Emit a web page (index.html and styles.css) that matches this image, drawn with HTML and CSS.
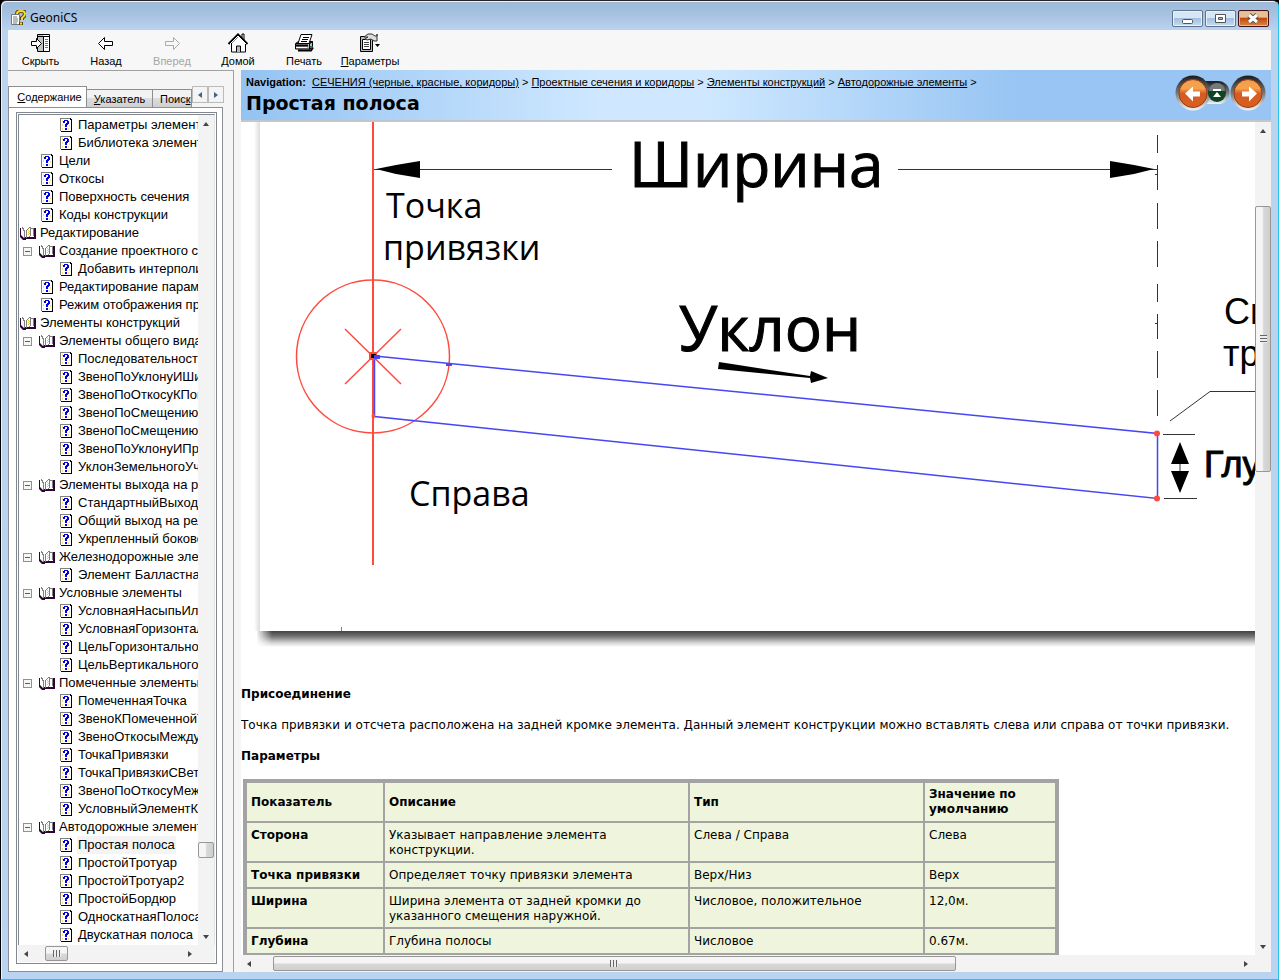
FILE: index.html
```html
<!DOCTYPE html>
<html lang="ru">
<head>
<meta charset="utf-8">
<title>GeoniCS</title>
<link rel="stylesheet" href="styles.css">
</head>
<body>
<svg class="defs" aria-hidden="true">
  <symbol id="page" viewBox="-1 0 16 16">
    <path d="M3 2h9v12H3z" fill="#fff"/>
    <path d="M1 1h11v1H2v12H1z" fill="#808080"/>
    <path d="M11 1h1v1h1v13H2v-1h10V3h-1z" fill="#000"/>
    <path d="M3 3h1v2H3zM3 7h1v2H3zM3 11h1v2H3zM10 8h1v2h-1zM9 11h1v2H9z" fill="#ffe27a"/>
    <path d="M4 4h1V3h4v1h1v3H9v1H8v2H6V7h1V6h1V4H6v2H4zM6 11h2v2H6z" fill="#0000e0"/>
  </symbol>
  <symbol id="book" viewBox="0 0 16 16">
    <path d="M1 2h2l2 3v8H3l-2-3z" fill="#fff"/>
    <path d="M6 4l3-3h1v2h4v9l-7 1H6z" fill="#fff"/>
    <path d="M0 3h1v7l3 3h2v2H3l-3-3z" fill="#2b062f"/>
    <path d="M14 3h2v11H4v-2h10z" fill="#2b062f"/>
    <path d="M2 2h1v1h1v2h1v8H4V6H3V4H2zM6 5h1v8H6zM7 4h1v1H7zM8 3h1v1H8zM9 2h2v9h-1V3H9zM9 11h1v1H9zM11 3h3v1h-3zM13 4h1v7h-1z" fill="#808080"/>
    <path d="M8 5h1v1H8zM8 7h1v1H8zM8 9h1v1H8zM9 6h1v1H9zM9 8h1v1H9z" fill="#f5cf3b"/>
  </symbol>
</svg>
<div class="window">
  <header class="titlebar">
    <svg class="app-icon" viewBox="0 0 16 16" aria-hidden="true">
      <path d="M1.500 4.500h8v10h-8z" fill="#fff" stroke="#777"/>
      <path d="M3 7h4M3 9h5M3 11h5M3 13h4" stroke="#777"/>
      <path d="M7 4q0-3 4-3 4 0 4 3 0 2-3 4v2M11 12v3" fill="none" stroke="#594510" stroke-width="4"/>
      <path d="M7 4q0-3 4-3 4 0 4 3 0 2-3 4v2M11 12.500v2" fill="none" stroke="#ffd92e" stroke-width="2"/>
    </svg>
    <span class="app-name">GeoniCS</span>
    <button class="win-btn" aria-label="Свернуть"><svg viewBox="0 0 29 15"><rect x="9.500" y="8.500" width="10" height="4" rx="1" fill="#fff" stroke="#555"/></svg></button>
    <button class="win-btn" aria-label="Развернуть"><svg viewBox="0 0 29 15"><path d="M9.500 3.500h10v8h-10z" fill="#fff" stroke="#555"/><path d="M12.500 6.500h4v2h-4z" fill="#9cc0e0" stroke="#555"/></svg></button>
    <button class="win-btn close" aria-label="Закрыть"><svg viewBox="0 0 29 15"><path d="M10 4l8 7M18 4l-8 7" stroke="#555" stroke-width="5"/><path d="M10 4l8 7M18 4l-8 7" stroke="#fff" stroke-width="3"/></svg></button>
  </header>

  <nav class="toolbar" aria-label="Панель инструментов">
    <button class="tool"><svg viewBox="0 0 22 20"><path d="M7.500 1.500h12v17h-12z" fill="#fff" stroke="#000"/><path d="M8 2h5v16H8z" fill="#c4c4c4"/><path d="M7 3.500h13M13.500 4v14" stroke="#000"/><path d="M15 6.500h3M15 8.500h3M15 10.500h3M15 12.500h3M15 14.500h3" stroke="#777"/><path d="M1.500 8.500h5v-3l5 5-5 5v-3h-5z" fill="#fff" stroke="#000"/></svg><span>Скрыть</span></button>
    <button class="tool"><svg viewBox="0 0 22 20"><path d="M3.500 10.500l6-6v4h8v4h-8v4z" fill="#fff" stroke="#000"/></svg><span>Назад</span></button>
    <button class="tool" disabled><svg viewBox="0 0 22 20"><path d="M18.500 10.500l-6-6v4h-8v4h8v4z" fill="#f7f7f7" stroke="#aaa"/></svg><span>Вперед</span></button>
    <button class="tool"><svg viewBox="0 0 22 20"><path d="M4.500 10v9h14v-9l-7-7z" fill="#fff" stroke="#000"/><path d="M15 5V1h2v6" fill="#fff" stroke="#000"/><path d="M1.500 11l9.500-9.500L20.500 11" fill="none" stroke="#000" stroke-width="2"/><path d="M3 11l8-8 8 8" fill="none" stroke="#fff"/><path d="M9.500 19v-6h4v6" fill="#bbb" stroke="#000"/></svg><span>Домой</span></button>
    <button class="tool"><svg viewBox="0 0 22 20"><path d="M2.500 10.500l3-2h14l-3 2zM2.500 11v5h14v-5M16.500 10.500l3-2v5l-3 3z" fill="#bbb" stroke="#000"/><path d="M5 10.500l3-9h11l-3 9z" fill="#fff" stroke="#000"/><path d="M10 4.500h6M9 6.500h6M8 8.500h6" stroke="#000"/><path d="M3 12.500h12M5 17.500h13l2-3" fill="none" stroke="#000" stroke-width="2"/><path d="M3 14.500h11" stroke="#fff"/><path d="M17 13h2v2h-2z" fill="#157f7f"/></svg><span>Печать</span></button>
    <button class="tool"><svg viewBox="0 0 22 20"><path d="M1.500 3.500h12v15h-12z" fill="#bbb" stroke="#000"/><path d="M3.500 6.500h8v10h-8z" fill="#fff" stroke="#000"/><path d="M5 9.500h5M5 11.500h5M5 13.500h5" stroke="#444"/><path d="M5 4l4-3h4l3 2h2V1v7h-3l-3-2-4 1-2-1 3-2z" fill="#ddd" stroke="#333"/><path d="M16 11h5l-2.500 3z" fill="#000"/></svg><span><u>П</u>араметры</span></button>
  </nav>

  <div class="workspace">
    <aside class="sidebar">
      <div class="tabs" role="tablist">
        <button class="tab active" role="tab" aria-selected="true"><u>С</u>одержание</button>
        <button class="tab" role="tab"><u>У</u>казатель</button>
        <button class="tab clipped" role="tab">Поис<u>к</u></button>
        <button class="tab-arrow" aria-label="Вкладки влево"><i class="tri left"></i></button>
        <button class="tab-arrow" aria-label="Вкладки вправо"><i class="tri right"></i></button>
      </div>
      <div class="panel">
        <div class="tree-frame">
          <div class="tree-main">
            <ul class="tree">
              <li class="l3"><svg><use href="#page"/></svg><span>Параметры элемента</span></li>
              <li class="l3"><svg><use href="#page"/></svg><span>Библиотека элемент</span></li>
              <li class="l2"><svg><use href="#page"/></svg><span>Цели</span></li>
              <li class="l2"><svg><use href="#page"/></svg><span>Откосы</span></li>
              <li class="l2"><svg><use href="#page"/></svg><span>Поверхность сечения</span></li>
              <li class="l2"><svg><use href="#page"/></svg><span>Коды конструкции</span></li>
              <li class="l1"><svg><use href="#book"/></svg><span>Редактирование</span></li>
              <li class="branch"><button class="toggle" aria-label="Свернуть ветвь"></button><svg><use href="#book"/></svg><span>Создание проектного се</span></li>
              <li class="l3"><svg><use href="#page"/></svg><span>Добавить интерполи</span></li>
              <li class="l2"><svg><use href="#page"/></svg><span>Редактирование парам</span></li>
              <li class="l2"><svg><use href="#page"/></svg><span>Режим отображения пр</span></li>
              <li class="l1"><svg><use href="#book"/></svg><span>Элементы конструкций</span></li>
              <li class="branch"><button class="toggle" aria-label="Свернуть ветвь"></button><svg><use href="#book"/></svg><span>Элементы общего вида</span></li>
              <li class="l3"><svg><use href="#page"/></svg><span>Последовательность</span></li>
              <li class="l3"><svg><use href="#page"/></svg><span>ЗвеноПоУклонуИШи</span></li>
              <li class="l3"><svg><use href="#page"/></svg><span>ЗвеноПоОткосуКПов</span></li>
              <li class="l3"><svg><use href="#page"/></svg><span>ЗвеноПоСмещению</span></li>
              <li class="l3"><svg><use href="#page"/></svg><span>ЗвеноПоСмещению</span></li>
              <li class="l3"><svg><use href="#page"/></svg><span>ЗвеноПоУклонуИПр</span></li>
              <li class="l3"><svg><use href="#page"/></svg><span>УклонЗемельногоУч</span></li>
              <li class="branch"><button class="toggle" aria-label="Свернуть ветвь"></button><svg><use href="#book"/></svg><span>Элементы выхода на р</span></li>
              <li class="l3"><svg><use href="#page"/></svg><span>СтандартныйВыходН</span></li>
              <li class="l3"><svg><use href="#page"/></svg><span>Общий выход на рел</span></li>
              <li class="l3"><svg><use href="#page"/></svg><span>Укрепленный боково</span></li>
              <li class="branch"><button class="toggle" aria-label="Свернуть ветвь"></button><svg><use href="#book"/></svg><span>Железнодорожные эле</span></li>
              <li class="l3"><svg><use href="#page"/></svg><span>Элемент Балластная</span></li>
              <li class="branch"><button class="toggle" aria-label="Свернуть ветвь"></button><svg><use href="#book"/></svg><span>Условные элементы</span></li>
              <li class="l3"><svg><use href="#page"/></svg><span>УсловнаяНасыпьИли</span></li>
              <li class="l3"><svg><use href="#page"/></svg><span>УсловнаяГоризонтал</span></li>
              <li class="l3"><svg><use href="#page"/></svg><span>ЦельГоризонтально</span></li>
              <li class="l3"><svg><use href="#page"/></svg><span>ЦельВертикального</span></li>
              <li class="branch"><button class="toggle" aria-label="Свернуть ветвь"></button><svg><use href="#book"/></svg><span>Помеченные элементы</span></li>
              <li class="l3"><svg><use href="#page"/></svg><span>ПомеченнаяТочка</span></li>
              <li class="l3"><svg><use href="#page"/></svg><span>ЗвеноКПомеченнойТ</span></li>
              <li class="l3"><svg><use href="#page"/></svg><span>ЗвеноОткосыМежду</span></li>
              <li class="l3"><svg><use href="#page"/></svg><span>ТочкаПривязки</span></li>
              <li class="l3"><svg><use href="#page"/></svg><span>ТочкаПривязкиСВет</span></li>
              <li class="l3"><svg><use href="#page"/></svg><span>ЗвеноПоОткосуМеж</span></li>
              <li class="l3"><svg><use href="#page"/></svg><span>УсловныйЭлементКП</span></li>
              <li class="branch"><button class="toggle" aria-label="Свернуть ветвь"></button><svg><use href="#book"/></svg><span>Автодорожные элемент</span></li>
              <li class="l3"><svg><use href="#page"/></svg><span class="selected">Простая полоса</span></li>
              <li class="l3"><svg><use href="#page"/></svg><span>ПростойТротуар</span></li>
              <li class="l3"><svg><use href="#page"/></svg><span>ПростойТротуар2</span></li>
              <li class="l3"><svg><use href="#page"/></svg><span>ПростойБордюр</span></li>
              <li class="l3"><svg><use href="#page"/></svg><span>ОдноскатнаяПолоса</span></li>
              <li class="l3"><svg><use href="#page"/></svg><span>Двускатная полоса</span></li>
            </ul>
            <div class="vbar tree-vbar">
              <button class="arrow" aria-label="Вверх"><i class="tri up"></i></button>
              <div class="before"></div><div class="thumb"></div><div class="after"></div>
              <button class="arrow" aria-label="Вниз"><i class="tri down"></i></button>
            </div>
          </div>
          <div class="hbar tree-hbar">
            <button class="arrow" aria-label="Влево"><i class="tri left"></i></button>
            <div class="before"></div><div class="thumb"><i class="grip"></i></div><div class="after"></div>
            <button class="arrow" aria-label="Вправо"><i class="tri right"></i></button>
          </div>
        </div>
      </div>
    </aside>

    <main class="content">
      <header class="topic">
        <div class="topic-text">
          <div class="crumbs"><b>Navigation:</b> <a href="#">СЕЧЕНИЯ (черные, красные, коридоры)</a> &gt; <a href="#">Проектные сечения и коридоры</a> &gt; <a href="#">Элементы конструкций</a> &gt; <a href="#">Автодорожные элементы</a> &gt;</div>
          <h1>Простая полоса</h1>
        </div>
        <svg class="topic-nav" viewBox="0 0 94 36" role="img" aria-label="Навигация по темам">
          <defs>
            <linearGradient id="ring" x1="0" y1="0" x2="0" y2="1"><stop offset="0" stop-color="#1c1c1c"/><stop offset=".5" stop-color="#77787a"/><stop offset="1" stop-color="#f4f4f4"/></linearGradient>
            <linearGradient id="orange" x1="0" y1="0" x2="0" y2="1"><stop offset="0" stop-color="#f0a050"/><stop offset=".32" stop-color="#f6a24c"/><stop offset=".5" stop-color="#d75a22"/><stop offset="1" stop-color="#d9601f"/></linearGradient>
          </defs>
          <path d="M28 6h15a11 11 0 0 1 0 23H28z" fill="url(#ring)"/>
          <circle cx="18" cy="18" r="17.500" fill="url(#ring)"/><circle cx="18" cy="18.500" r="14" fill="url(#orange)" stroke="#9b3b12"/>
          <path d="M10 18.500l8-7v5h7v5h-7v5z" fill="#fff"/>
          <circle cx="42" cy="18" r="9" fill="#0d4426"/><path d="M34 16a8 8 0 0 1 16 0z" fill="#747b7b"/><path d="M38 14h8v2h-8zM38 22l4-5 4 5z" fill="#fff"/>
          <circle cx="73" cy="18" r="17.500" fill="url(#ring)"/><circle cx="73" cy="18.500" r="14" fill="url(#orange)" stroke="#9b3b12"/>
          <path d="M82 18.500l-8-7v5h-7v5h7v5z" fill="#fff"/>
        </svg>
      </header>
      <div class="viewer">
        <div class="view-main">
          <article class="document">
            <svg class="diagram" viewBox="241 122 1014 549" role="img" aria-label="Схема элемента простая полоса">
              <defs>
                <linearGradient id="side" x1="0" x2="1"><stop offset="0" stop-color="#fff"/><stop offset="1" stop-color="#dcdcdc"/></linearGradient>
                <linearGradient id="under" x1="0" y1="0" x2="0" y2="1"><stop offset="0" stop-color="#414141"/><stop offset=".35" stop-color="#777"/><stop offset=".7" stop-color="#ccc"/><stop offset="1" stop-color="#fff"/></linearGradient>
                <linearGradient id="corner" x1="0" x2="1"><stop offset="0" stop-color="#fff"/><stop offset="1" stop-color="#fff" stop-opacity="0"/></linearGradient>
              </defs>
              <path d="M254 122h6v509h-6z" fill="url(#side)"/>
              <path d="M257 631h998v16H257z" fill="url(#under)"/>
              <path d="M256 631h16v17h-16z" fill="url(#corner)"/>
              <rect x="341" y="627" width="1" height="4" fill="#ff4b3e"/>
              <g class="dim">
                <path d="M374 169.500h238M898 169.500h259" />
                <path d="M1157.500 135v18M1157.500 165v25M1157.500 203v26M1157.500 241v26M1157.500 284v18M1157.500 314v25M1157.500 351v27M1157.500 390v26M1155 174.500h3M1155 323.500h3"/>
                <path d="M1170 421l40-29.500h45M1163 434.500h32M1164 498.500h33M1180 450v40"/>
              </g>
              <path d="M376 169l20-4 24-4v17l-24-4zM1154 169l-20-4-24-4v17l24-4zM1180 442l-9 22h18zM1180 493l-9-22h18z"/>
              <path d="M719 362l71 11 20 3 1-5 17 7-17 5-1-5-21-2-71-7z"/>
              <path class="red thick" d="M373 122v443"/>
              <circle class="red" cx="373" cy="356.500" r="76.500"/>
              <path class="red" d="M345 329l56 55M401 329l-56 55"/>
              <path class="blue" d="M374.500 356L1157.500 433.500v65L374.500 416.500z"/>
              <path d="M369 352h8v8h-8z" fill="#ff4b3e"/><path d="M371 354h5v4h-5z"/>
              <path d="M374 355h6v4h-6zM446 363h6v3h-6z" fill="#4646f5"/>
              <circle class="dot" cx="1157" cy="433.500" r="3"/><circle class="dot" cx="1157" cy="498.500" r="3"/><circle class="dot" cx="373.500" cy="416" r="2"/>
              <g class="label">
                <text class="huge" x="629" y="187">Ширина</text>
                <text class="huge" x="679" y="351">Уклон</text>
                <text x="386" y="218">Точка</text>
                <text x="383" y="260">привязки</text>
                <text x="409" y="506">Справа</text>
              </g>
              <g class="label side-label">
                <text x="1224" y="324">Сп</text>
                <text x="1223" y="366">тр</text>
                <text class="strong" x="1204" y="477">Глу</text>
              </g>
            </svg>
            <h2>Присоединение</h2>
            <p>Точка привязки и отсчета расположена на задней кромке элемента. Данный элемент конструкции можно вставлять слева или справа от точки привязки.</p>
            <h2>Параметры</h2>
            <table>
              <colgroup><col class="c1"><col class="c2"><col class="c3"><col class="c4"></colgroup>
              <thead><tr><th>Показатель</th><th>Описание</th><th>Тип</th><th>Значение по умолчанию</th></tr></thead>
              <tbody>
                <tr><th scope="row">Сторона</th><td>Указывает направление элемента конструкции.</td><td>Слева / Справа</td><td>Слева</td></tr>
                <tr><th scope="row">Точка привязки</th><td>Определяет точку привязки элемента</td><td>Верх/Низ</td><td>Верх</td></tr>
                <tr><th scope="row">Ширина</th><td>Ширина элемента от задней кромки до указанного смещения наружной.</td><td>Числовое, положительное</td><td>12,0м.</td></tr>
                <tr><th scope="row">Глубина</th><td>Глубина полосы</td><td>Числовое</td><td>0.67м.</td></tr>
              </tbody>
            </table>
          </article>
          <div class="vbar view-vbar">
            <button class="arrow" aria-label="Вверх"><i class="tri up"></i></button>
            <div class="before"></div><div class="thumb"><i class="grip"></i></div><div class="after"></div>
            <button class="arrow" aria-label="Вниз"><i class="tri down"></i></button>
          </div>
        </div>
        <div class="hbar view-hbar">
          <button class="arrow" aria-label="Влево"><i class="tri left"></i></button>
          <div class="before"></div><div class="thumb"><i class="grip"></i></div><div class="after"></div>
          <button class="arrow" aria-label="Вправо"><i class="tri right"></i></button>
        </div>
      </div>
    </main>
  </div>
</div>
</body>
</html>
```
FILE: styles.css
```css
* { box-sizing: border-box; }
body {
  margin: 0;
  background: #000;
  color: #000;
  font-family: "Liberation Sans", Arial, sans-serif;
  font-size: 11px;
}
button { margin: 0; padding: 0; border: 0; background: none; font: inherit; color: inherit; }
.defs { position: absolute; width: 0; height: 0; }

.window {
  display: flex;
  flex-direction: column;
  height: 100vh;
  padding: 0 7px 7px;
  border: 1px solid #000;
  border-top-color: #2b2426;
  border-right-color: #22c3e6;
  border-bottom-color: #22c3e6;
  border-radius: 6px 6px 0 0;
  background: linear-gradient(#9db9d8, #a5c1e0 12px, #bbd3ef 30px, #b9d3f0);
  box-shadow: inset 1px 1px #e8f3fc;
}

/* Title bar */
.titlebar { display: flex; flex: none; height: 29px; padding: 0 2px; gap: 2px; align-items: center; }
.app-icon { width: 16px; height: 16px; margin-top: 4px; }
.app-name { flex: 1; padding: 4px 0 0 2px; font-family: "Noto Sans", sans-serif; font-size: 12px; }
.win-btn {
  width: 31px; height: 17px; margin-top: 6px;
  border: 1px solid #60748c; border-radius: 2px;
  background: linear-gradient(#d7e6f5 45%, #a3c0df 50%, #c4dcf3);
  box-shadow: inset 0 0 0 1px #e6f1fb;
}
.win-btn svg { display: block; width: 29px; height: 15px; }
.win-btn.close { border-color: #44111b; background: linear-gradient(#e5c295 40%, #c0490f 50%, #d98b44); box-shadow: inset 0 0 0 1px #eab983; }

/* Toolbar */
.toolbar { display: flex; flex: none; height: 40px; background: #f7f7f7; }
.tool { display: flex; flex-direction: column; align-items: center; width: 66px; padding-top: 3px; }
.tool svg { width: 22px; height: 20px; }
.tool span { font-size: 11px; line-height: 16px; }
.tool:first-child { width: 65px; }
.tool:disabled { color: #a5a5a5; }

.workspace { display: flex; flex: 1; min-height: 0; background: #f5f5f5; }

/* Sidebar */
.sidebar { display: flex; flex-direction: column; flex: none; width: 226px; padding: 15px 10px 0 0; border-top: 1px solid #a0a0a0; border-right: 1px solid #a0a0a0; }
.tabs { display: flex; flex: none; align-items: flex-end; height: 21px; width: 216px; }
.tab { height: 18px; flex: none; width: 66px; border: 1px solid #8c8e94; border-left: 0; border-bottom: 0; background: linear-gradient(#f2f2f2 45%, #dcdcdc 50%, #d0d0d0); font-size: 11px; white-space: nowrap; }
.tab.active { width: 79px; height: 21px; padding-left: 4px; border-left: 1px solid #8c8e94; background: #fff; }
.tab.clipped { width: 39px; padding-left: 7px; text-align: left; }
.tab-arrow { flex: none; display: grid; place-items: center; align-self: flex-start; width: 16px; height: 17px; border: 1px solid #bbb; background: #f4f4f4; }
.tab-arrow .tri { color: #3f6585; }
.panel { display: flex; flex: 1; min-height: 0; padding: 4px 5px 7px 7px; border: 1px solid #8c8e94; background: #fff; }
.tree-frame { display: flex; flex-direction: column; flex: 1; min-width: 0; border: 1px solid #828790; padding: 1px; }
.tree-main { display: flex; flex: 1; min-height: 0; border: 1px solid #828790; border-bottom: 0; border-right-color: #e3e3e3; }
.tree { flex: 1; min-width: 0; overflow: hidden; margin: 0; padding: 1px 0 0; list-style: none; font-size: 13px; line-height: 18px; white-space: nowrap; }
.tree li { display: flex; align-items: center; gap: 3px; height: 18px; }
.tree svg { flex: none; width: 16px; height: 16px; }
.tree span { padding: 0 1px; }
.tree .selected { background: #f4f4f4; }
.l1 { padding-left: 1px; }
.l2 { padding-left: 20px; }
.l3 { padding-left: 39px; }
.branch { padding-left: 4px; }
.toggle { flex: none; width: 9px; height: 9px; margin-right: 4px; border: 1px solid #919191; background: linear-gradient(#3c5fa8, #3c5fa8) center / 5px 1px no-repeat #f6f6f6; }

/* Scroll bars */
.vbar, .hbar { display: flex; flex: none; background: #f3f3f3; }
.vbar { flex-direction: column; width: 16px; }
.hbar { height: 17px; }
.arrow { flex: none; display: grid; place-items: center; width: 16px; height: 17px; }
.thumb { flex: none; display: grid; place-items: center; border: 1px solid #979797; border-radius: 2px; }
.vbar .thumb { background: linear-gradient(90deg, #f5f5f5 45%, #d8d8d8 55%, #cfcfcf); }
.hbar .thumb { background: linear-gradient(#f5f5f5 45%, #d8d8d8 55%, #cfcfcf); }
.grip { width: 8px; height: 7px; background: repeating-linear-gradient(90deg, #666 0 1px, #eee 1px 3px); }
.vbar .grip { width: 7px; height: 8px; background: repeating-linear-gradient(#666 0 1px, #eee 1px 3px); }
.tri { width: 0; height: 0; border: 3px solid transparent; color: #444; }
.tri.up { border-bottom: 4px solid; border-top: 0; }
.tri.down { border-top: 4px solid; border-bottom: 0; }
.tri.left { border-right: 4px solid; border-left: 0; }
.tri.right { border-left: 4px solid; border-right: 0; }
.tree-vbar .before { flex: 708; }
.tree-vbar .thumb { height: 16px; }
.tree-vbar .after { flex: 70; }
.tree-hbar .before { flex: 12; }
.tree-hbar .thumb { width: 23px; margin: 1px 0; }
.tree-hbar .after { flex: 120; }
.tree-hbar { padding-right: 17px; }
.view-vbar .before { flex: 67; }
.view-vbar .thumb { flex: 265; }
.view-vbar .after { flex: 467; }
.view-hbar .before { flex: 16; }
.view-hbar .thumb { flex: 682; margin: 1px 0; }
.view-hbar .after { flex: 283; }

/* Topic pane */
.content { display: flex; flex: 1; flex-direction: column; min-width: 0; margin-left: 7px; }
.topic {
  display: flex; flex: none; justify-content: space-between; align-items: flex-start;
  height: 52px; padding: 5px 2px 0 5px; border-bottom: 2px solid #c3c7cc;
  background: linear-gradient(90deg, #94c3f2, #cfe8ff 35%, #cfe8ff 45%, #98c5f3 75%);
}
.topic-text { padding-top: 1px; white-space: nowrap; }
.crumbs { line-height: 13px; }
.crumbs b { margin-right: 3px; }
.crumbs a { color: inherit; }
h1 { margin: 3px 0 0; font: bold 19px/22px "DejaVu Sans", Verdana, sans-serif; }
.topic-nav { flex: none; width: 94px; height: 36px; }
.viewer { display: flex; flex: 1; flex-direction: column; min-height: 0; }
.view-main { display: flex; flex: 1; min-height: 0; }
.document { flex: 1; min-width: 0; overflow: hidden; background: #fff; font: 12px/15px "DejaVu Sans", Verdana, sans-serif; }
.view-hbar { padding-right: 17px; }
h2 { margin: 16px 0 15px; font: inherit; font-weight: bold; }
p { margin: 16px 0; white-space: nowrap; }

/* Diagram */
.diagram { display: block; width: 1014px; height: 549px; }
.dim path { fill: none; stroke: #333; }
.red { fill: none; stroke: #ff4b3e; stroke-width: 1.5; }
.red.thick { stroke-width: 2; }
.blue { fill: none; stroke: #4646f5; stroke-width: 1.5; }
.dot { fill: #ff4b3e; }
.label { font-family: "Open Sans", "Noto Sans", sans-serif; font-size: 34px; }
.huge { font-size: 62px; stroke: #000; }
.side-label { font-family: "Liberation Sans", Arial, sans-serif; font-size: 36px; }
.strong { stroke: #000; }

/* Parameters */
table { table-layout: fixed; width: 816px; margin-left: 2px; border: 2px solid #a3a3a3; border-spacing: 2px; background: #a3a3a3; }
.c1 { width: 136px; }
.c2 { width: 303px; }
.c3 { width: 233px; }
.c4 { width: 130px; }
th, td { height: 24px; padding: 5px 4px 3px; background: #eef5dc; text-align: left; vertical-align: top; }
thead th { padding: 4px; vertical-align: middle; }
```
